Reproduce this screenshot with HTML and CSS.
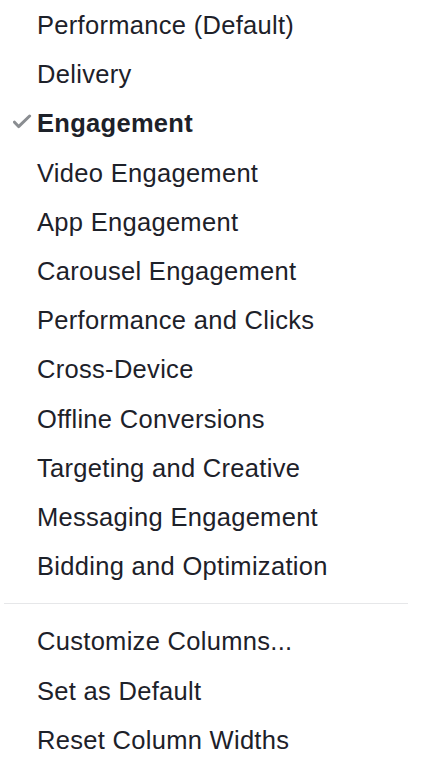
FILE: index.html
```html
<!DOCTYPE html>
<html>
<head>
<meta charset="utf-8">
<link rel="stylesheet" href="styles.css">
</head>
<body>
<div class="menu">
  <ul class="group group-top">
    <li class="item">Performance (Default)</li>
    <li class="item">Delivery</li>
    <li class="item selected">
      <svg class="check" width="20" height="16" viewBox="0 0 20 16"><path d="M1.5 8.2 L5.6 12.6 L16.6 2" fill="none" stroke="#8a8d91" stroke-width="3" stroke-linecap="round" stroke-linejoin="round"/></svg>
      Engagement
    </li>
    <li class="item">Video Engagement</li>
    <li class="item">App Engagement</li>
    <li class="item">Carousel Engagement</li>
    <li class="item">Performance and Clicks</li>
    <li class="item">Cross-Device</li>
    <li class="item">Offline Conversions</li>
    <li class="item">Targeting and Creative</li>
    <li class="item">Messaging Engagement</li>
    <li class="item">Bidding and Optimization</li>
  </ul>
  <div class="separator"></div>
  <ul class="group group-bottom">
    <li class="item">Customize Columns...</li>
    <li class="item">Set as Default</li>
    <li class="item">Reset Column Widths</li>
  </ul>
</div>
</body>
</html>
```

FILE: styles.css
```css
html, body {
  margin: 0;
  padding: 0;
  background: #ffffff;
}

body {
  font-family: "Liberation Sans", Arial, sans-serif;
  color: #1d2129;
}

.menu {
  width: 421px;
  margin-top: 1px;
}

.group {
  list-style: none;
  margin: 0;
  padding: 0;
}

.item {
  position: relative;
  height: 49.2px;
  line-height: 49.2px;
  padding-left: 37px;
  font-size: 25.5px;
  letter-spacing: 0.3px;
  white-space: nowrap;
}

.group-bottom .item {
  height: 49.5px;
  line-height: 49.5px;
}

.selected {
  font-weight: bold;
}

.check {
  position: absolute;
  left: 13px;
  top: 15px;
}

.separator {
  height: 1px;
  background: #e6e7e9;
  margin: 12px 13px 13px 4px;
}
```
